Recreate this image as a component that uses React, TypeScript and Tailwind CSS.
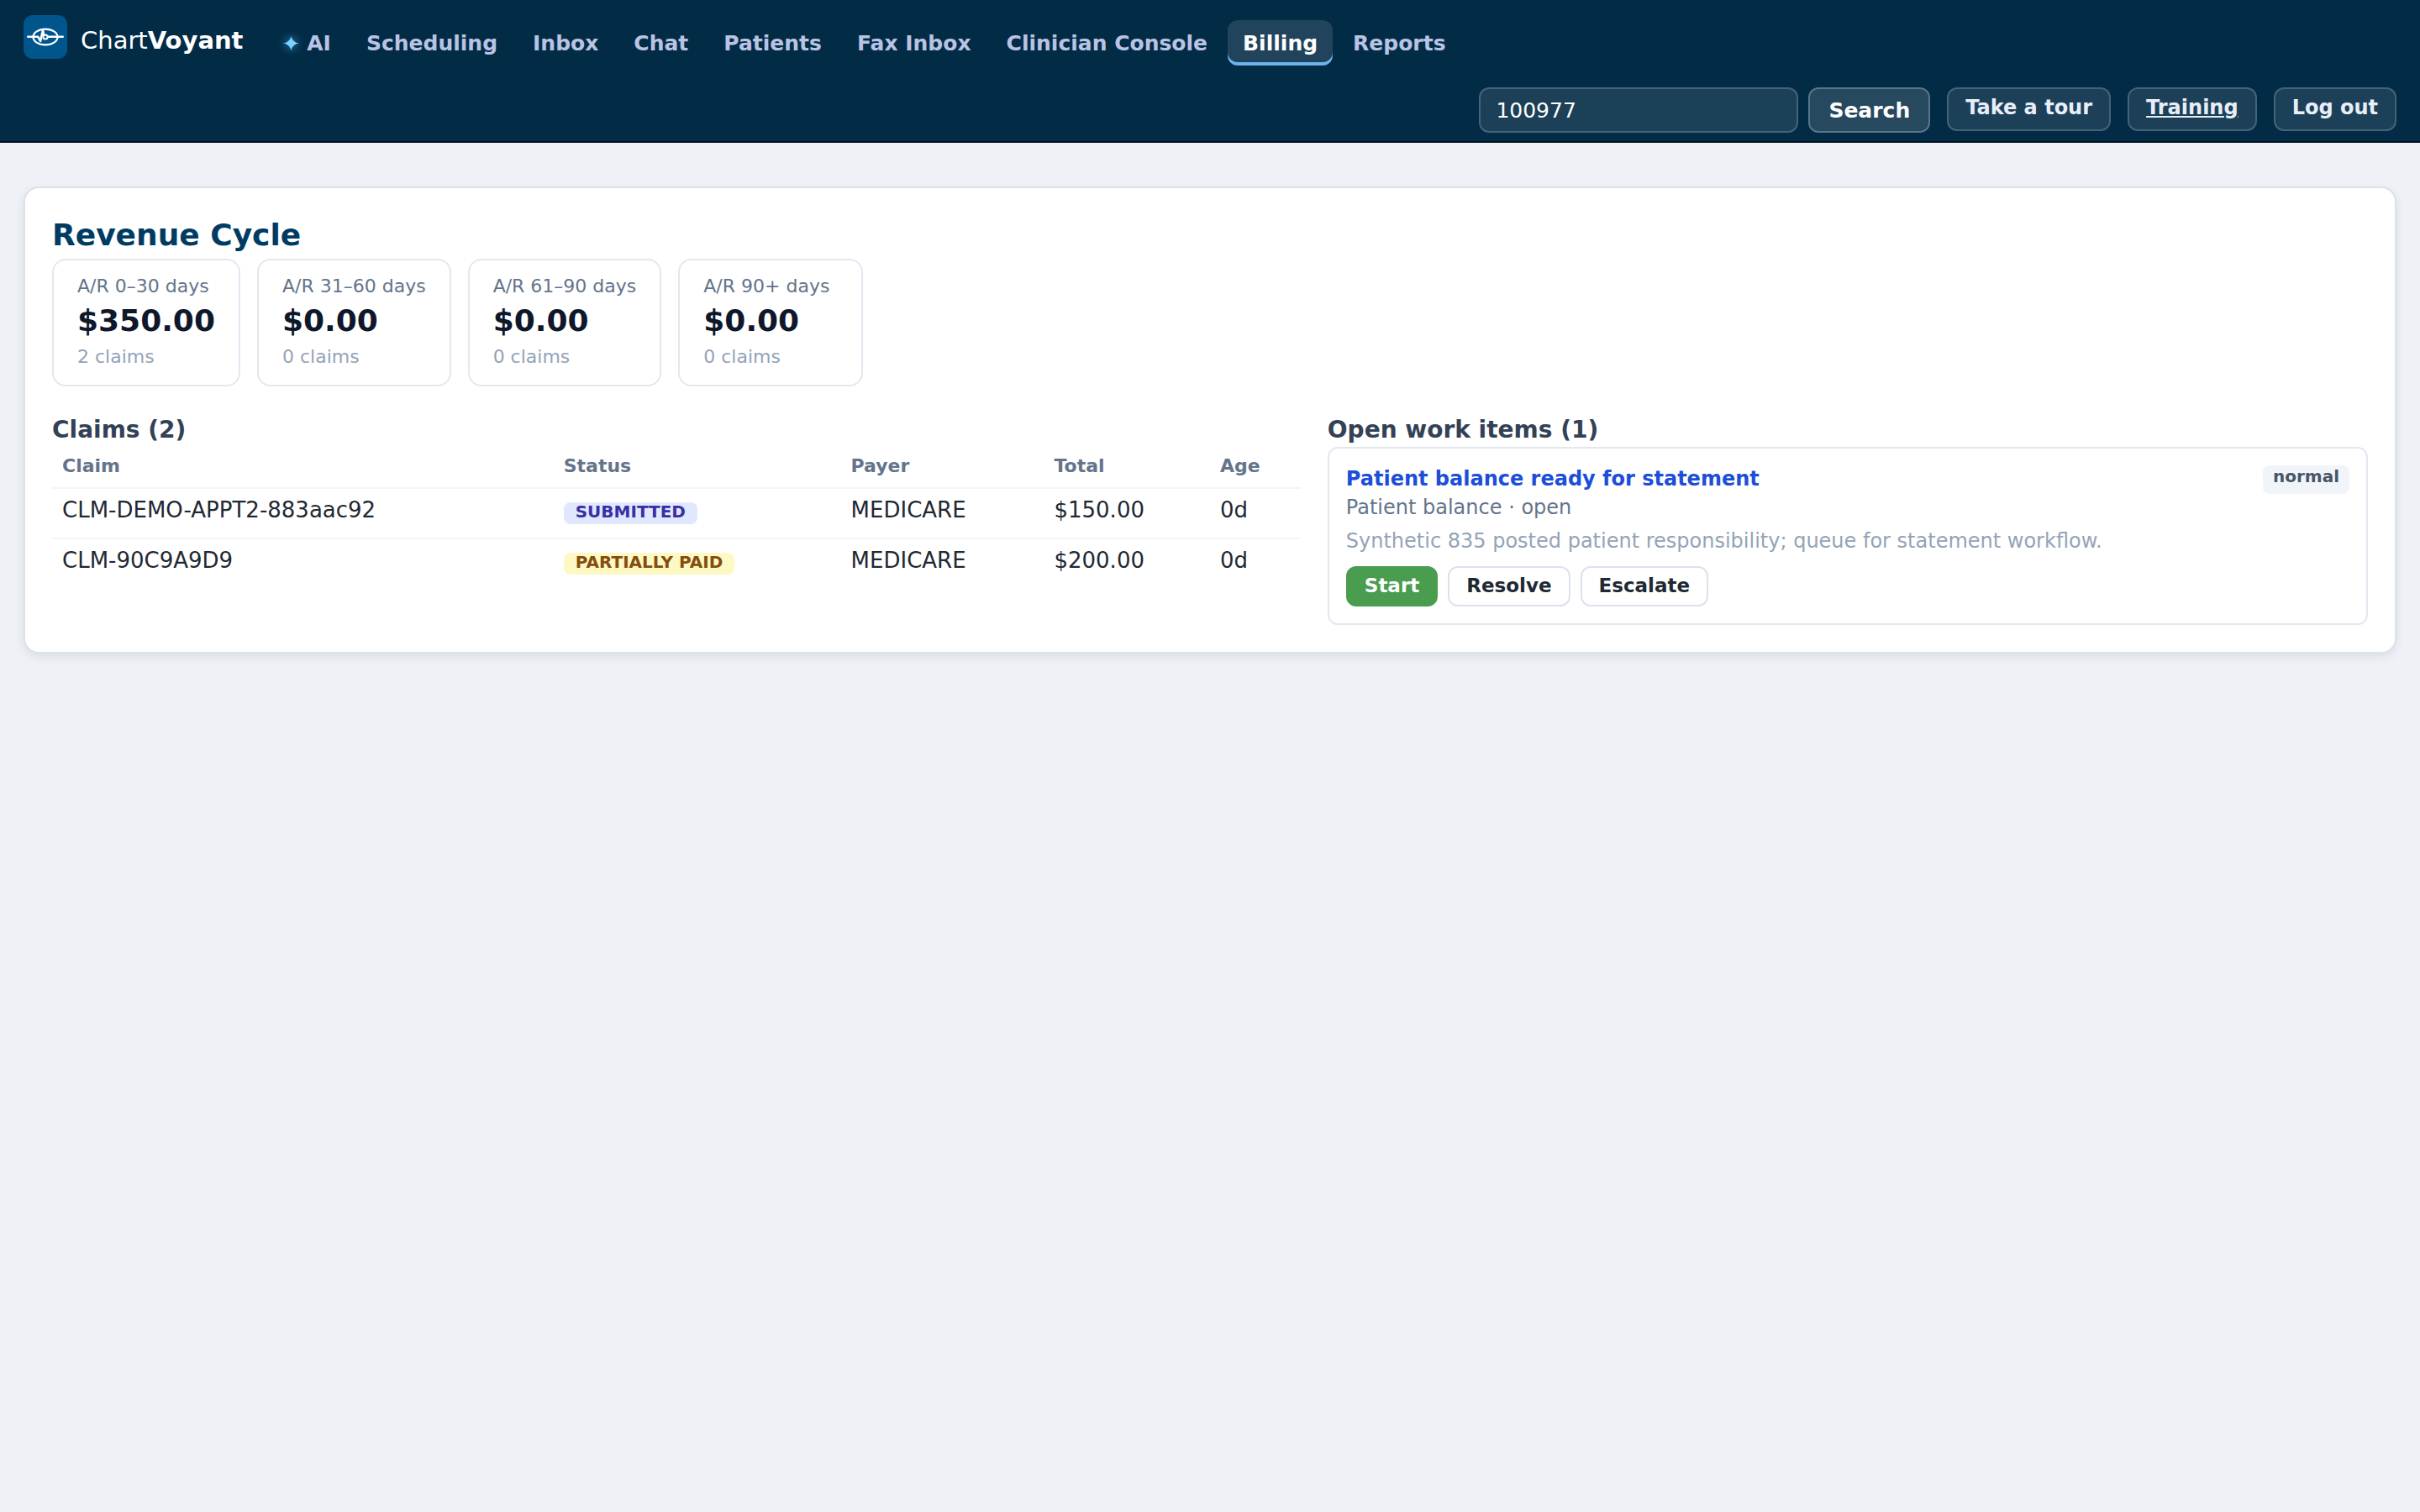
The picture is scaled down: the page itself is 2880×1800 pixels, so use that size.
import { useState } from "react";
import clsx from "clsx";

const navItems = [
  "AI",
  "Scheduling",
  "Inbox",
  "Chat",
  "Patients",
  "Fax Inbox",
  "Clinician Console",
  "Billing",
  "Reports",
];

const buckets = [
  { label: "A/R 0–30 days", amount: "$350.00", claims: 2 },
  { label: "A/R 31–60 days", amount: "$0.00", claims: 0 },
  { label: "A/R 61–90 days", amount: "$0.00", claims: 0 },
  { label: "A/R 90+ days", amount: "$0.00", claims: 0 },
];

const claims = [
  {
    id: "CLM-DEMO-APPT2-883aac92",
    status: "SUBMITTED",
    payer: "MEDICARE",
    total: "$150.00",
    age: "0d",
  },
  {
    id: "CLM-90C9A9D9",
    status: "PARTIALLY PAID",
    payer: "MEDICARE",
    total: "$200.00",
    age: "0d",
  },
];

const statusStyles: Record<string, string> = {
  SUBMITTED: "bg-[#e0e7ff] text-[#3730a3]",
  "PARTIALLY PAID": "bg-[#fef9c3] text-[#854d0e]",
};

const headerButton =
  "rounded-xl border-2 border-[#45627a] bg-[#1c4058] px-5 pt-1.5 pb-2.5 text-[24px] leading-8 font-bold text-[#e8eef8]";

const actionButton =
  "rounded-xl border-2 px-5 pt-1.5 pb-2 text-[23px] leading-[30px] font-bold";

function Logo() {
  return (
    <svg width="52" height="52" viewBox="0 0 52 52" fill="none" aria-hidden="true">
      <rect width="52" height="52" rx="11" fill="#00568c" />
      <g stroke="#fff" strokeLinecap="round" strokeLinejoin="round">
        <ellipse cx="26" cy="26" rx="14.6" ry="9.4" strokeWidth="2.1" />
        <path d="M5.3 25.8h12l2.8 5.2L23 18l1.4 7" strokeWidth="2.6" />
        <path d="M29 25.8h17.7" strokeWidth="2.6" />
        <circle cx="26" cy="26" r="2.6" fill="#00568c" strokeWidth="2" />
      </g>
    </svg>
  );
}

function Header() {
  const [query, setQuery] = useState("100977");
  const [active, setActive] = useState("Billing");

  return (
    <header className="border-b-2 border-[#00101f] bg-[#022b45] px-7 pt-[18px] pb-2.5">
      <div className="flex items-start gap-7">
        <a href="#" className="flex items-start gap-4 text-[29px] leading-[60px] text-white">
          <Logo />
          <span>
            Chart<b>Voyant</b>
          </span>
        </a>
        <nav className="flex gap-1.5 pt-1.5">
          {navItems.map((item) => (
            <a
              key={item}
              href="#"
              onClick={() => setActive(item)}
              className={clsx(
                "flex items-center gap-2 rounded-xl px-[18px] pt-[11px] pb-[9px] text-[25px] leading-[34px] font-bold",
                item === active
                  ? "bg-[#21435b] text-white shadow-[inset_0_-4px_0_#6bb3ea]"
                  : "text-[#b9c3e4]"
              )}
            >
              {item === "AI" && (
                <span className="text-[26px] font-normal text-[#7dd3fc] [text-shadow:0_0_12px_#38a8e8]">
                  ✦
                </span>
              )}
              {item}
            </a>
          ))}
        </nav>
      </div>

      <div className="mt-[26px] flex items-start justify-end gap-5">
        <form className="flex gap-3" onSubmit={(e) => e.preventDefault()}>
          <input
            type="text"
            aria-label="Search"
            value={query}
            onChange={(e) => setQuery(e.target.value)}
            className="w-[380px] rounded-xl border-2 border-[#45627a] bg-[#1c4058] px-[18px] pt-[9px] pb-[7px] text-[25px] leading-[34px] text-white"
          />
          <button
            type="submit"
            className="rounded-xl border-2 border-[#5a7489] bg-[#26495f] px-[22px] pt-[9px] pb-[7px] text-[25px] leading-[34px] font-bold text-white"
          >
            Search
          </button>
        </form>
        <button className={headerButton}>Take a tour</button>
        <a href="#" className={clsx(headerButton, "underline")}>
          Training
        </a>
        <button className={headerButton}>Log out</button>
      </div>
    </header>
  );
}

function ClaimsTable() {
  return (
    <table className="w-full text-left text-[26px] leading-[30px] text-[#1f2933]">
      <thead>
        <tr className="border-b-2 border-[#f1f5f9] text-[22px] leading-8 text-[#64748b]">
          {["Claim", "Status", "Payer", "Total", "Age"].map((h) => (
            <th key={h} className="px-3 pt-[7px] pb-[9px] font-bold">
              {h}
            </th>
          ))}
        </tr>
      </thead>
      <tbody>
        {claims.map((c) => (
          <tr key={c.id} className="border-b-2 border-[#f1f5f9] align-top last:border-b-0">
            <td className="px-3 pt-2.5 pb-4">{c.id}</td>
            <td className="px-3 pt-2.5 pb-4">
              <span
                className={clsx(
                  "inline-block rounded-lg px-3.5 pb-1 text-[20px] leading-[22px] font-bold",
                  statusStyles[c.status]
                )}
              >
                {c.status}
              </span>
            </td>
            <td className="px-3 pt-2.5 pb-4">{c.payer}</td>
            <td className="px-3 pt-2.5 pb-4">{c.total}</td>
            <td className="px-3 pt-2.5 pb-4">{c.age}</td>
          </tr>
        ))}
      </tbody>
    </table>
  );
}

function WorkItem() {
  return (
    <div className="rounded-xl border-2 border-[#e2e8f0] p-5">
      <div className="flex items-start justify-between">
        <div>
          <a href="#" className="block text-[24px] leading-8 font-bold text-[#1d4ed8]">
            Patient balance ready for statement
          </a>
          <p className="text-[24px] leading-9 text-[#64748b]">Patient balance · open</p>
        </div>
        <span className="rounded-lg bg-[#f1f5f9] px-3 pb-2 text-[20px] leading-[26px] font-bold text-[#475569]">
          normal
        </span>
      </div>
      <p className="mt-1.5 text-[24px] leading-8 text-[#94a3b8]">
        Synthetic 835 posted patient responsibility; queue for statement workflow.
      </p>
      <div className="mt-3.5 flex gap-3">
        <button className={clsx(actionButton, "border-[#4a9d4f] bg-[#4a9d4f] text-white")}>
          Start
        </button>
        <button className={clsx(actionButton, "border-[#dbe2ec] bg-white text-[#1f2933]")}>
          Resolve
        </button>
        <button className={clsx(actionButton, "border-[#dbe2ec] bg-white text-[#1f2933]")}>
          Escalate
        </button>
      </div>
    </div>
  );
}

export default function App() {
  return (
    <div className="min-h-screen bg-[#eef1f6] font-['DejaVu_Sans',sans-serif]">
      <Header />
      <main className="px-7 pt-[52px]">
        <section className="rounded-[18px] border-2 border-[#dbe2ea] bg-white p-8 shadow-[0_4px_12px_rgba(15,23,42,0.08)]">
          <h1 className="mb-1 text-[36px] leading-[48px] font-bold text-[#003b63]">
            Revenue Cycle
          </h1>

          <div className="flex flex-wrap gap-5">
            {buckets.map((b) => (
              <div
                key={b.label}
                className="min-w-[220px] rounded-2xl border-2 border-[#e2e8f0] px-7 py-[15px]"
              >
                <p className="text-[22px] leading-8 text-[#64748b]">{b.label}</p>
                <p className="text-[36px] leading-[50px] font-bold text-[#0f172a]">{b.amount}</p>
                <p className="text-[22px] leading-9 text-[#94a3b8]">{b.claims} claims</p>
              </div>
            ))}
          </div>

          <div className="mt-8 grid grid-cols-[6fr_5fr] gap-8">
            <div>
              <h2 className="text-[28px] leading-10 font-bold text-[#334155]">
                Claims ({claims.length})
              </h2>
              <ClaimsTable />
            </div>
            <div>
              <h2 className="text-[28px] leading-10 font-bold text-[#334155]">
                Open work items (1)
              </h2>
              <WorkItem />
            </div>
          </div>
        </section>
      </main>
    </div>
  );
}
